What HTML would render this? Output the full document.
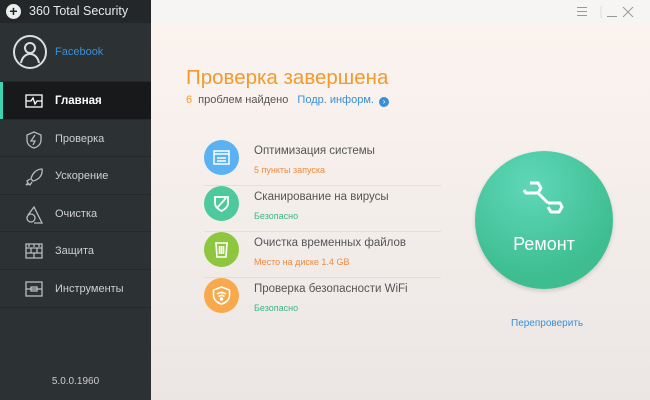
<!DOCTYPE html>
<html><head><meta charset="utf-8"><style>
*{margin:0;padding:0;box-sizing:border-box}
body{width:650px;height:400px;overflow:hidden;font-family:"Liberation Sans",sans-serif;position:relative;background:#f1ecea}
#side{position:absolute;left:0;top:0;width:151px;height:400px;background:#2c3133}
#tb{height:23px;background:#232729;color:#e8e8e8;font-size:12.5px;line-height:23px;padding-left:29px;position:relative}
#tb .lg{position:absolute;left:6px;top:4px;width:15px;height:15px;border-radius:50%;background:#eee;color:#232729;font-size:14px;line-height:15px;text-align:center;font-weight:bold}
#prof{height:59px;position:relative;border-bottom:1px solid #24282a}
#prof .av{position:absolute;left:13px;top:12px;width:34px;height:34px;border:2px solid #ddd;border-radius:50%}
#prof span{position:absolute;left:55px;top:23px;color:#3b8fd6;font-size:11px}
.it{height:37.6px;position:relative;color:#cfcfcf;font-size:11px;line-height:39px;padding-left:55px;border-bottom:1px solid #25292b}
.it.a{background:#18191a;color:#fff;font-weight:bold;font-size:11.5px}
.it.a:before{content:"";position:absolute;left:0;top:0;width:3px;height:100%;background:#3dd4b0}
.it svg{position:absolute;left:25px;top:11px}
#ver{position:absolute;bottom:13px;left:0;width:151px;text-align:center;color:#ccc;font-size:10px}
#main{position:absolute;left:151px;top:0;right:0;height:400px;background:linear-gradient(#fdf4ef,#f4eeeb 50%,#ebe6e4)}
#hd{height:23px;background:#f7f5f4;position:relative}
h1{position:absolute;left:35px;top:66px;color:#f29a2e;font-weight:normal;font-size:20.5px}
#sub{position:absolute;left:35px;top:94px;font-size:11px;color:#555}
#sub b{color:#f29a2e;font-weight:normal;margin-right:6px}
#sub a{color:#3b8fd6;margin-left:6px}
#sub i{display:inline-block;width:10px;height:10px;border-radius:50%;background:#3b8fd6;color:#fff;font-size:8px;line-height:10px;text-align:center;font-style:normal;vertical-align:-1px;margin-left:2px}
.row{position:absolute;left:53px;width:237px;height:46px;border-bottom:1px solid #e3dedb}
.row .c{position:absolute;left:0;top:0;width:35px;height:35px;border-radius:50%}
.row .t{position:absolute;left:50px;top:5px;font-size:11.5px;color:#555}
.row .s{position:absolute;left:50px;top:25px;font-size:9px}
#btn{position:absolute;left:324px;top:151px;width:138px;height:138px;border-radius:50%;background:radial-gradient(circle at 40% 25%,#5fd7b8,#3dbd90 70%);box-shadow:0 2px 4px rgba(0,0,0,.15)}
#btn span{position:absolute;top:83px;width:100%;text-align:center;color:#fff;font-size:18px}
#rc{position:absolute;left:360px;top:318px;color:#3b8fd6;font-size:10px}
</style></head><body>
<div id="side">
<div id="tb"><div class="lg">+</div>360 Total Security</div>
<div id="prof"><div class="av"><svg width="30" height="30" viewBox="0 0 30 30" fill="none" stroke="#ddd" stroke-width="2"><circle cx="15" cy="11" r="5"/><path d="M6 26c1-6 5-9 9-9s8 3 9 9"/></svg></div><span>Facebook</span></div>
<div class="it a"><svg width="18" height="16" fill="none" stroke="#fff" stroke-width="1.3"><rect x="1" y="2" width="16" height="12"/><path d="M1 8h5l2-3 2 6 2-3h5"/></svg>Главная</div>
<div class="it"><svg width="18" height="18" fill="none" stroke="#bbb" stroke-width="1.3"><path d="M9 1l7 3v5c0 4-3 7-7 8-4-1-7-4-7-8V4z"/><path d="M10 4l-4 6h4l-2 4"/></svg>Проверка</div>
<div class="it"><svg width="18" height="18" fill="none" stroke="#bbb" stroke-width="1.3"><path d="M17 1c-6 0-10 5-11 10l2 2c5-1 10-5 9-12zM5 11l-3 2 1 2-2 2 3-1 1 1 2-3"/></svg>Ускорение</div>
<div class="it"><svg width="20" height="18" fill="none" stroke="#bbb" stroke-width="1.3"><circle cx="6" cy="12" r="4"/><path d="M3 9l6-8 8 16H9"/></svg>Очистка</div>
<div class="it"><svg width="18" height="16" fill="none" stroke="#bbb" stroke-width="1.3"><path d="M1 1h16v14H1zM1 5h16M1 10h16M6 5v5M12 5v5M9 10v5M4 1v3M9 1v3M14 1v3"/></svg>Защита</div>
<div class="it"><svg width="18" height="16" fill="none" stroke="#bbb" stroke-width="1.3"><rect x="1" y="1" width="16" height="14"/><path d="M1 8h16"/><rect x="6" y="6" width="6" height="4"/></svg>Инструменты</div>
<div id="ver">5.0.0.1960</div>
</div>
<div id="main">
<div id="hd"><svg style="position:absolute;left:424px;top:6px" width="60" height="12" stroke="#999" fill="none"><path d="M2 1.5h10M2 5.5h10M2 9.5h10M32 10.5h10M48 1l10 10M58 1l-10 10"/><path d="M26 0v14" stroke="#ddd"/></svg></div>
<h1>Проверка завершена</h1>
<div id="sub"><b>6</b>проблем найдено <a>Подр. информ. <i>›</i></a></div>
<div class="row" style="top:140px"><div class="c" style="background:#5ab2f2"><svg width="35" height="35" fill="none" stroke="#fff" stroke-width="1.5"><rect x="10" y="11" width="15" height="13"/><path d="M10 14h15M13 18h9M13 21h9"/></svg></div><div class="t">Оптимизация системы</div><div class="s" style="color:#f08a3c">5 пункты запуска</div></div>
<div class="row" style="top:186px"><div class="c" style="background:#4ec99d"><svg width="35" height="35" fill="none" stroke="#fff" stroke-width="1.8"><path d="M11 11h13v6c0 4-3 6-6.5 8-3.5-2-6.5-4-6.5-8z M22 12l-9 10"/></svg></div><div class="t">Сканирование на вирусы</div><div class="s" style="color:#3ab58a">Безопасно</div></div>
<div class="row" style="top:232px"><div class="c" style="background:#8ec63f"><svg width="35" height="35" fill="none" stroke="#fff" stroke-width="1.6"><path d="M11 11h13M12 11l1 14h9l1-14M15.5 14v8M17.5 14v8M19.5 14v8"/></svg></div><div class="t">Очистка временных файлов</div><div class="s" style="color:#f08a3c">Место на диске 1.4 GB</div></div>
<div class="row" style="top:278px;border:none"><div class="c" style="background:#f7a94b"><svg width="35" height="35" fill="none" stroke="#fff" stroke-width="1.6"><path d="M17.5 9l8 3v5c0 5-4 8-8 9-4-1-8-4-8-9v-5z M13 16c3-2 6-2 9 0M14.5 18.5c2-1.5 4-1.5 6 0"/><circle cx="17.5" cy="21" r="1" fill="#fff"/></svg></div><div class="t">Проверка безопасности WiFi</div><div class="s" style="color:#3ab58a">Безопасно</div></div>
<div id="btn"><svg style="position:absolute;left:46px;top:30px" width="46" height="50" fill="none" stroke="#fff" stroke-width="3" stroke-linejoin="round"><path d="M9 2h8l3 5-3 5H5l-2-3M17 12l10 10M27 22h12l2 4-3 5h-8l-3-5"/></svg><span>Ремонт</span></div>
<div id="rc">Перепроверить</div>
</div>
</body></html>
